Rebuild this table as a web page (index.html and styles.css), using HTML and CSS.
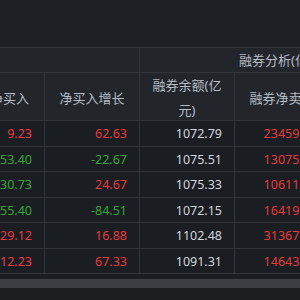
FILE: index.html
```html
<!DOCTYPE html>
<html lang="zh">
<head>
<meta charset="utf-8">
<link rel="stylesheet" href="styles.css">
</head>
<body>
<div class="page">
  <div class="top"></div>
  <div class="viewport">
    <div class="table">
      <div class="hrow1">
        <div class="grp grp-a"></div>
        <div class="grp grp-b">融券分析(亿元)</div>
      </div>
      <div class="hrow2">
        <div class="hc">净买入</div>
        <div class="hc">净买入增长</div>
        <div class="hc">融券余额(亿元)</div>
        <div class="hc">融券净卖出</div>
        <div class="hc">融券偿还</div>
      </div>
      <div class="row">
        <div class="c up">9.23</div><div class="c up">62.63</div><div class="c">1072.79</div><div class="c up">23459.86</div><div class="c">0</div>
      </div>
      <div class="row">
        <div class="c dn">-53.40</div><div class="c dn">-22.67</div><div class="c">1075.51</div><div class="c up">13075.42</div><div class="c">0</div>
      </div>
      <div class="row">
        <div class="c dn">-30.73</div><div class="c up">24.67</div><div class="c">1075.33</div><div class="c up">10611.25</div><div class="c">0</div>
      </div>
      <div class="row">
        <div class="c dn">-55.40</div><div class="c dn">-84.51</div><div class="c">1072.15</div><div class="c up">16419.73</div><div class="c">0</div>
      </div>
      <div class="row">
        <div class="c up">29.12</div><div class="c up">16.88</div><div class="c">1102.48</div><div class="c up">31367.10</div><div class="c">0</div>
      </div>
      <div class="row">
        <div class="c up">12.23</div><div class="c up">67.33</div><div class="c">1091.31</div><div class="c up">14643.58</div><div class="c">0</div>
      </div>
    </div>
  </div>
  <div class="gap"></div>
  <div class="scrollbar"></div>
  <div class="bottom"></div>
</div>
</body>
</html>
```
FILE: styles.css
```css
html, body {
  margin: 0;
  padding: 0;
  background: #1c1f23;
}
.page {
  width: 300px;
  height: 300px;
  overflow: hidden;
  font-family: "Noto Sans", "Noto Sans CJK SC", sans-serif;
  display: flex;
  flex-direction: column;
}
.top {
  height: 47px;
  flex: none;
  background: #1d2024;
  border-bottom: 1px solid #31353a;
}
.viewport {
  overflow: hidden;
  flex: none;
  background: #1a1d21;
}
.table {
  margin-left: -55px;
  width: 600px;
  display: flex;
  flex-direction: column;
}
.hrow1 {
  display: grid;
  grid-template-columns: 195px 1fr;
  height: 24px;
  background: #22262b;
  border-bottom: 1px solid #31353a;
}
.grp {
  font-size: 13px;
  color: #b6bdc6;
  line-height: 24px;
}
.grp-a {
  border-right: 1px solid #31353a;
}
.grp-b {
  padding-left: 99px;
}
.hrow2 {
  display: grid;
  grid-template-columns: 100px 95px 95px 95px 215px;
  height: 47px;
  background: #22262b;
  border-bottom: 1px solid #31353a;
}
.hc {
  font-size: 13px;
  color: #b6bdc6;
  line-height: 25px;
  text-align: center;
  display: flex;
  align-items: center;
  justify-content: center;
  padding: 0 12px;
  border-right: 1px solid #31353a;
}
.hc:first-child {
  justify-content: flex-end;
  padding-right: 15px;
}
.row {
  display: grid;
  grid-template-columns: 100px 95px 95px 95px 215px;
  height: 25px;
  border-bottom: 1px solid #31353a;
}
.row:nth-child(even) {
  height: 24px;
}
.c {
  font-size: 12.5px;
  color: #d2d6dc;
  text-align: right;
  padding-right: 12px;
  line-height: 25px;
  border-right: 1px solid #31353a;
}
.c.up { color: #e8393b; }
.c.dn { color: #35a535; }
.gap {
  height: 5px;
  flex: none;
  background: #1a1d21;
}
.scrollbar {
  height: 9px;
  flex: none;
  background: #3b3e42;
}
.bottom {
  flex: 1;
  background: #1c1f22;
}
```
